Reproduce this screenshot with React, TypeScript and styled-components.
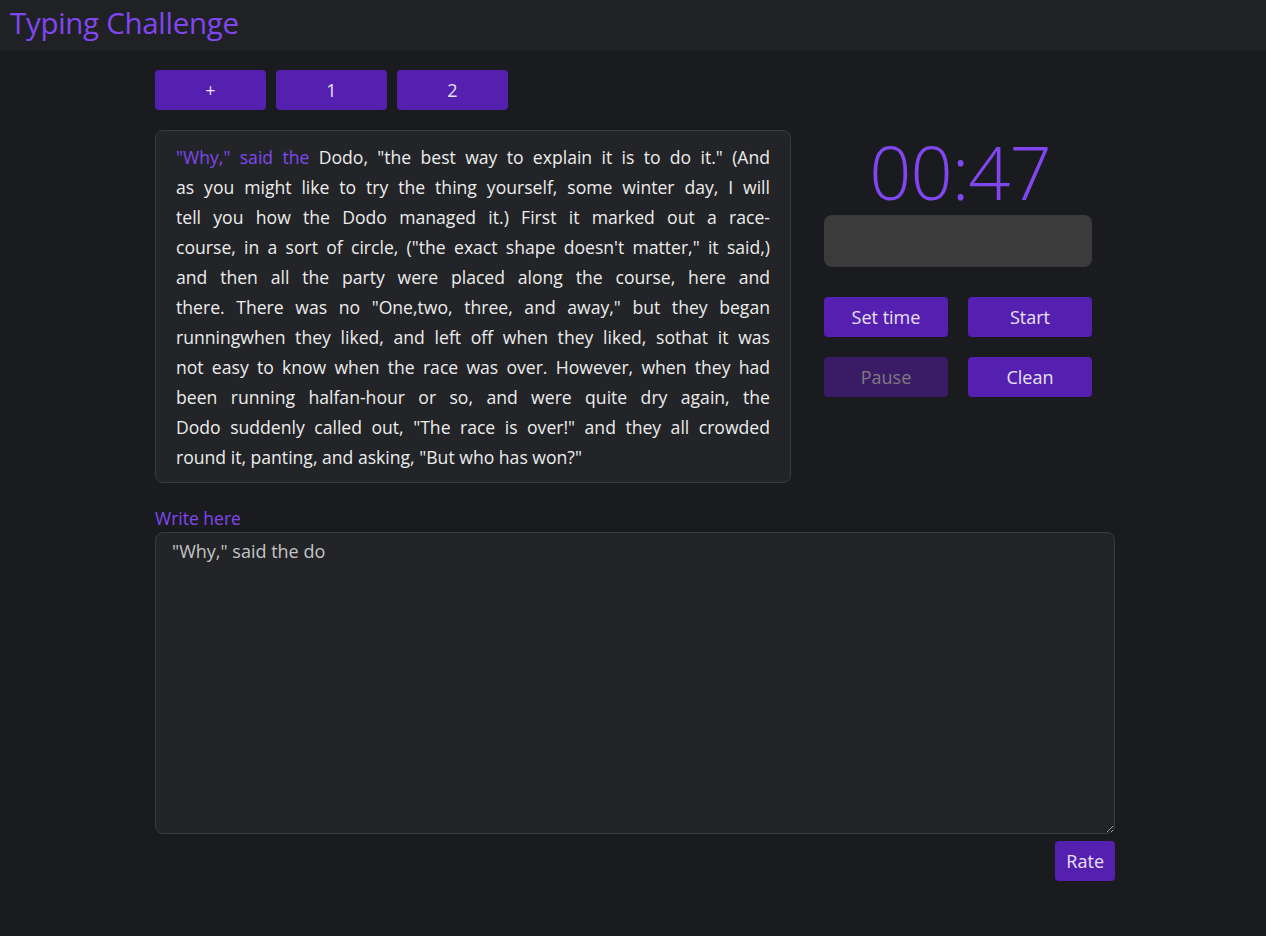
import styled, { createGlobalStyle } from "styled-components"

const GlobalStyle = createGlobalStyle`
  * { box-sizing: border-box; }
  body {
    margin: 0;
    background: #1a1b1e;
    color: #e6e6e6;
    font-family: "Open Sans", "Noto Sans", sans-serif;
  }
`

const Header = styled.header`
  background: #202124;
  height: 50px;
  display: flex;
  align-items: center;
  padding: 0 0 6px 10px;
`

const Brand = styled.h1`
  margin: 0;
  font-size: 29.5px;
  font-weight: 400;
  color: #8047f0;
  letter-spacing: -0.3px;
`

const Main = styled.main`
  width: 960px;
  margin: 0 auto;
  padding: 20px 0 40px;
  transform: translateX(2px);
`

const Tabs = styled.div`
  display: flex;
  gap: 10px;
  margin-bottom: 20px;
`

const Button = styled.button<{ $w?: number; $h?: number }>`
  width: ${p => (p.$w ? `${p.$w}px` : "auto")};
  height: ${p => p.$h ?? 40}px;
  padding: 0 11px;
  border: none;
  border-radius: 4px;
  background: #551fb0;
  color: #e8e2f4;
  font-family: inherit;
  font-size: 18px;
  cursor: pointer;
  &:disabled {
    background: #3a1c66;
    color: #7d7a82;
    cursor: default;
  }
`

const Top = styled.div`
  display: flex;
  gap: 33px;
  align-items: flex-start;
`

const TextCard = styled.div`
  width: 636px;
  background: #222427;
  border: 1px solid #3a3b3e;
  border-radius: 8px;
  padding: 11px 20px 10px;
  font-size: 17.6px;
  line-height: 30px;
  color: #ececec;
`

const Line = styled.span<{ $last?: boolean }>`
  display: block;
  text-align: justify;
  text-align-last: ${p => (p.$last ? "left" : "justify")};
  white-space: nowrap;
`

const Done = styled.span`
  color: #8047f0;
`

const Side = styled.div`
  width: 268px;
  display: flex;
  flex-direction: column;
`

const Timer = styled.div`
  text-align: center;
  font-size: 74px;
  font-weight: 300;
  line-height: 84px;
  color: #8047f0;
  padding-left: 4px;
  letter-spacing: -1px;
`

const Progress = styled.div`
  height: 52px;
  background: #3b3b3b;
  border-radius: 8px;
  margin-top: 1px;
  margin-bottom: 30px;
`

const Controls = styled.div`
  display: grid;
  grid-template-columns: 124px 124px;
  justify-content: space-between;
  row-gap: 20px;
`

const Label = styled.label`
  display: block;
  margin-top: 23px;
  margin-bottom: 2px;
  font-size: 17.5px;
  color: #8047f0;
`

const Area = styled.textarea`
  display: block;
  width: 100%;
  height: 302px;
  background: #222427;
  border: 1px solid #3a3b3e;
  border-radius: 8px;
  padding: 4px 16px;
  font-family: inherit;
  font-size: 18px;
  line-height: 28px;
  color: #c4c4c4;
  outline: none;
`

const Footer = styled.div`
  display: flex;
  justify-content: flex-end;
  margin-top: 7px;
`

const typed = '"Why," said the'

// the passage as the reference breaks it, first line starts after the typed part
const lines = [
  ' Dodo, "the best way to explain it is to do it." (And',
  'as you might like to try the thing yourself, some winter day, I will',
  'tell you how the Dodo managed it.) First it marked out a race-',
  'course, in a sort of circle, ("the exact shape doesn\'t matter," it said,)',
  'and then all the party were placed along the course, here and',
  'there. There was no "One,two, three, and away," but they began',
  'runningwhen they liked, and left off when they liked, sothat it was',
  'not easy to know when the race was over. However, when they had',
  'been running halfan-hour or so, and were quite dry again, the',
  'Dodo suddenly called out, "The race is over!" and they all crowded',
  'round it, panting, and asking, "But who has won?"',
]

const App = () => {
  return (
    <>
      <GlobalStyle />
      <Header>
        <Brand>Typing Challenge</Brand>
      </Header>
      <Main>
        <Tabs>
          <Button $w={111}>+</Button>
          <Button $w={111}>1</Button>
          <Button $w={111}>2</Button>
        </Tabs>
        <Top>
          <TextCard>
            {lines.map((l, i) => (
              <Line key={i} $last={i === lines.length - 1}>
                {i === 0 && <Done>{typed}</Done>}
                {l}
              </Line>
            ))}
          </TextCard>
          <Side>
            <Timer>00:47</Timer>
            <Progress />
            <Controls>
              <Button $w={124}>Set time</Button>
              <Button $w={124}>Start</Button>
              <Button $w={124} disabled>Pause</Button>
              <Button $w={124}>Clean</Button>
            </Controls>
          </Side>
        </Top>
        <Label htmlFor="write">Write here</Label>
        <Area id="write" defaultValue={'"Why," said the do'} />
        <Footer>
          <Button>Rate</Button>
        </Footer>
      </Main>
    </>
  )
}

export default App
